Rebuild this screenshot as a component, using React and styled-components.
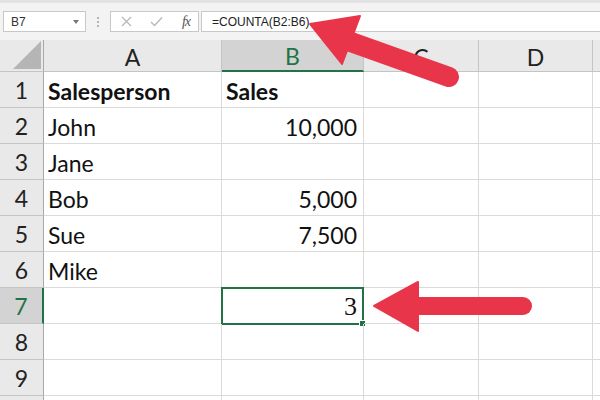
import React from 'react';
import styled, { createGlobalStyle, css } from 'styled-components';

const GREEN = '#217346';
const GRID = '#dadada';
const HEAD_LINE = '#c4c4c4';

const GlobalStyle = createGlobalStyle`
  html, body {
    margin: 0;
    padding: 0;
    background: #ffffff;
  }
  body {
    width: 600px;
    height: 400px;
    overflow: hidden;
  }
`;

const Page = styled.div`
  position: relative;
  width: 600px;
  height: 400px;
  overflow: hidden;
  background: #fff;
  font-family: Lato, 'Noto Sans', sans-serif;
`;

const Toolbar = styled.div`
  height: 40px;
  box-sizing: border-box;
  display: flex;
  align-items: flex-start;
  background: #f3f3f3;
  border-top: 3px solid #e2e2e2;
  padding-top: 8px;
`;

const Box = styled.div`
  height: 21px;
  box-sizing: border-box;
  background: #fff;
  border: 1px solid #c8c8c8;
  display: flex;
  align-items: center;
  font-family: 'Liberation Sans', Arial, sans-serif;
  font-size: 12px;
  color: #333;
`;

const NameBox = styled(Box)`
  width: 83px;
  margin-left: 3px;
  padding: 0 6px 0 7px;
  justify-content: space-between;
`;

const Caret = styled.span`
  width: 0;
  height: 0;
  border-left: 3.5px solid transparent;
  border-right: 3.5px solid transparent;
  border-top: 4px solid #777;
`;

const Dots = styled.div`
  width: 24px;
  height: 21px;
  display: flex;
  flex-direction: column;
  align-items: center;
  justify-content: center;
  gap: 2px;
  span {
    width: 2px;
    height: 2px;
    background: #b5b5b5;
  }
`;

const FxBox = styled(Box)`
  width: 89px;
  padding: 0 8px 0 10px;
  justify-content: space-between;
`;

const Fx = styled.span`
  font-family: 'Liberation Serif', serif;
  font-style: italic;
  font-size: 14px;
  color: #555;
  letter-spacing: -1px;
`;

const FormulaBox = styled(Box)`
  flex: 1;
  margin-left: 2px;
  padding-left: 10px;
  border-right: none;
  color: #222;
`;

const Sheet = styled.div`
  display: grid;
  grid-template-columns: 44px 178px 142px 115px 114px 1fr;
  grid-template-rows: 32px;
  grid-auto-rows: 36px;
`;

const Corner = styled.div`
  background: #e9e9e9;
  border-right: 1px solid #a9a9a9;
  border-bottom: 1px solid ${HEAD_LINE};
  box-sizing: border-box;
  display: flex;
  align-items: flex-end;
  justify-content: flex-end;
  padding: 0 2px 2px 0;
`;

const ColHead = styled.div`
  box-sizing: border-box;
  background: ${p => (p.$active ? '#d3d3d3' : '#e9e9e9')};
  border-right: 1px solid ${HEAD_LINE};
  border-bottom: ${p => (p.$active ? `2px solid ${GREEN}` : `1px solid ${HEAD_LINE}`)};
  color: ${p => (p.$active ? GREEN : '#222')};
  font-size: 23px;
  display: flex;
  align-items: center;
  justify-content: center;
  padding-top: 2px;
`;

const RowHead = styled.div`
  box-sizing: border-box;
  background: ${p => (p.$active ? '#d3d3d3' : '#e9e9e9')};
  border-bottom: 1px solid ${HEAD_LINE};
  border-right: ${p => (p.$active ? `2px solid ${GREEN}` : '1px solid #a9a9a9')};
  color: ${p => (p.$active ? GREEN : '#222')};
  font-size: 23px;
  display: flex;
  align-items: center;
  justify-content: center;
`;

const Cell = styled.div`
  position: relative;
  box-sizing: border-box;
  border-right: 1px solid ${GRID};
  border-bottom: 1px solid ${GRID};
  display: flex;
  align-items: center;
  padding: 2px 6px 0 4px;
  font-size: 23px;
  color: #111;
  white-space: nowrap;
  justify-content: ${p => (p.$right ? 'flex-end' : 'flex-start')};
  font-weight: ${p => (p.$bold ? 700 : 400)};
  ${p =>
    p.$selected &&
    css`
      font-family: 'Liberation Serif', serif;
      font-size: 26px;
      padding-right: 6px;
      &::before {
        content: '';
        position: absolute;
        left: -1px;
        top: -1px;
        right: -1px;
        bottom: -2px;
        border: 2px solid ${GREEN};
      }
      &::after {
        content: '';
        position: absolute;
        right: -3px;
        bottom: -4px;
        width: 5px;
        height: 5px;
        background: ${GREEN};
        border: 1px solid #fff;
      }
    `}
`;

const Overlay = styled.svg`
  position: absolute;
  left: 0;
  top: 0;
  pointer-events: none;
`;

const columns = ['A', 'B', 'C', 'D', ''];

const rows = [
  ['Salesperson', 'Sales'],
  ['John', '10,000'],
  ['Jane', ''],
  ['Bob', '5,000'],
  ['Sue', '7,500'],
  ['Mike', ''],
  ['', '3'],
  ['', ''],
  ['', ''],
  ['', ''],
];

const Arrows = () => (
  <Overlay width="600" height="400" viewBox="0 0 600 400">
    <g fill="#e8354a" stroke="#e8354a" strokeLinejoin="round">
      <line x1="348" y1="41" x2="449" y2="77" strokeWidth="20" strokeLinecap="round" />
      <polygon points="310,24 360,16 342,64" strokeWidth="2" />
      <line x1="414" y1="306" x2="523" y2="306" strokeWidth="18" strokeLinecap="round" />
      <polygon points="374,306 418,282 418,331" strokeWidth="2" />
    </g>
  </Overlay>
);

const App = () => (
  <Page>
    <GlobalStyle />
    <Toolbar>
      <NameBox>
        B7
        <Caret />
      </NameBox>
      <Dots>
        <span />
        <span />
        <span />
      </Dots>
      <FxBox>
        <svg width="11" height="11" viewBox="0 0 11 11">
          <path d="M1 1 L10 10 M10 1 L1 10" stroke="#b8b8b8" strokeWidth="1.3" fill="none" />
        </svg>
        <svg width="13" height="11" viewBox="0 0 13 11">
          <path d="M1 6 L4.5 9.5 L12 1.5" stroke="#b8b8b8" strokeWidth="1.4" fill="none" />
        </svg>
        <Fx>fx</Fx>
      </FxBox>
      <FormulaBox>=COUNTA(B2:B6)</FormulaBox>
    </Toolbar>
    <Sheet>
      <Corner>
        <svg width="28" height="28" viewBox="0 0 28 28">
          <polygon points="0,28 28,28 28,0" fill="#b5b5b5" />
        </svg>
      </Corner>
      {columns.map((c, i) => (
        <ColHead key={i} $active={c === 'B'}>
          {c}
        </ColHead>
      ))}
      {rows.map((r, i) => (
        <React.Fragment key={i}>
          <RowHead $active={i === 6}>{i < 9 ? i + 1 : ''}</RowHead>
          <Cell $bold={i === 0}>{r[0]}</Cell>
          <Cell $bold={i === 0} $right={i > 0} $selected={i === 6}>
            {r[1]}
          </Cell>
          <Cell />
          <Cell />
          <Cell />
        </React.Fragment>
      ))}
    </Sheet>
    <Arrows />
  </Page>
);

export default App;
